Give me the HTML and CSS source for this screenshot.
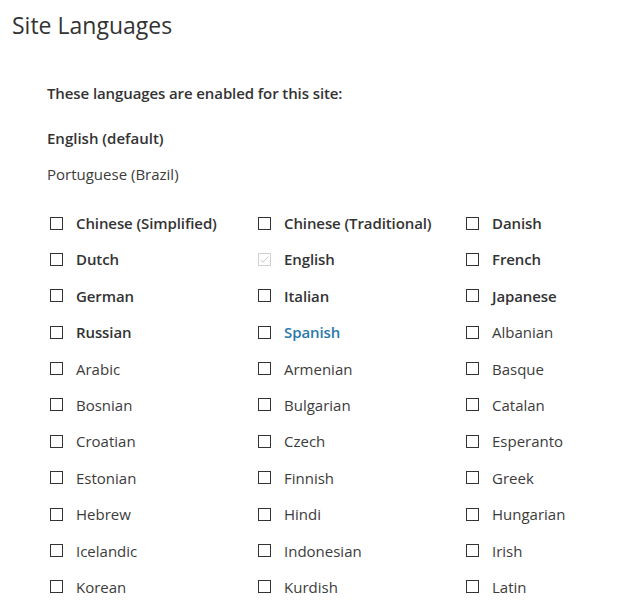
FILE: index.html
```html
<!DOCTYPE html>
<html>
<head>
<meta charset="utf-8">
<link rel="stylesheet" href="styles.css">
</head>
<body>
<h1 class="title">Site Languages</h1>
<div class="content">
  <p class="intro">These languages are enabled for this site:</p>
  <p class="enabled default">English (default)</p>
  <p class="enabled">Portuguese (Brazil)</p>
  <ul class="langs">
    <li class="lang bold"><span class="box"></span><span>Chinese (Simplified)</span></li>
    <li class="lang bold"><span class="box"></span><span>Chinese (Traditional)</span></li>
    <li class="lang bold"><span class="box"></span><span>Danish</span></li>
    <li class="lang bold"><span class="box"></span><span>Dutch</span></li>
    <li class="lang bold"><span class="box disabled"><svg viewBox="0 0 13 13" width="13" height="13"><path d="M2.5 6.8 L5 9.2 L10.5 3.6" fill="none" stroke="#c8c8c8" stroke-width="1"/></svg></span><span>English</span></li>
    <li class="lang bold"><span class="box"></span><span>French</span></li>
    <li class="lang bold"><span class="box"></span><span>German</span></li>
    <li class="lang bold"><span class="box"></span><span>Italian</span></li>
    <li class="lang bold"><span class="box"></span><span>Japanese</span></li>
    <li class="lang bold"><span class="box"></span><span>Russian</span></li>
    <li class="lang bold link"><span class="box"></span><span>Spanish</span></li>
    <li class="lang"><span class="box"></span><span>Albanian</span></li>
    <li class="lang"><span class="box"></span><span>Arabic</span></li>
    <li class="lang"><span class="box"></span><span>Armenian</span></li>
    <li class="lang"><span class="box"></span><span>Basque</span></li>
    <li class="lang"><span class="box"></span><span>Bosnian</span></li>
    <li class="lang"><span class="box"></span><span>Bulgarian</span></li>
    <li class="lang"><span class="box"></span><span>Catalan</span></li>
    <li class="lang"><span class="box"></span><span>Croatian</span></li>
    <li class="lang"><span class="box"></span><span>Czech</span></li>
    <li class="lang"><span class="box"></span><span>Esperanto</span></li>
    <li class="lang"><span class="box"></span><span>Estonian</span></li>
    <li class="lang"><span class="box"></span><span>Finnish</span></li>
    <li class="lang"><span class="box"></span><span>Greek</span></li>
    <li class="lang"><span class="box"></span><span>Hebrew</span></li>
    <li class="lang"><span class="box"></span><span>Hindi</span></li>
    <li class="lang"><span class="box"></span><span>Hungarian</span></li>
    <li class="lang"><span class="box"></span><span>Icelandic</span></li>
    <li class="lang"><span class="box"></span><span>Indonesian</span></li>
    <li class="lang"><span class="box"></span><span>Irish</span></li>
    <li class="lang"><span class="box"></span><span>Korean</span></li>
    <li class="lang"><span class="box"></span><span>Kurdish</span></li>
    <li class="lang"><span class="box"></span><span>Latin</span></li>
  </ul>
</div>
</body>
</html>
```

FILE: styles.css
```css
html, body {
  margin: 0;
  padding: 0;
  background: #fff;
}
body {
  font-family: "Open Sans", "Noto Sans", sans-serif;
  color: #3c3c3c;
  font-size: 15px;
  overflow: hidden;
}
.title {
  margin: 0;
  padding: 8px 0 0 12px;
  font-size: 23px;
  font-weight: 400;
  line-height: 34px;
  color: #333;
}
.content {
  padding: 40px 0 0 47px;
}
.intro {
  margin: 0;
  font-weight: 600;
  line-height: 22px;
  color: #333;
  letter-spacing: -0.1px;
}
.enabled {
  margin: 0;
  line-height: 22px;
}
.default {
  margin-top: 23px;
  font-weight: 600;
  color: #333;
}
.enabled + .enabled {
  margin-top: 14px;
}
.langs {
  list-style: none;
  margin: 27px 0 0 0;
  padding: 0 0 0 3px;
  display: grid;
  grid-template-columns: 208px 208px 150px;
  grid-auto-rows: 36.4px;
}
.lang {
  display: flex;
  align-items: center;
  gap: 13px;
  height: 22px;
  line-height: 22px;
  white-space: nowrap;
}
.lang.bold {
  font-weight: 600;
  color: #333;
  letter-spacing: -0.1px;
}
.lang.link {
  color: #2a79aa;
}
.box {
  width: 11px;
  height: 11px;
  border: 1px solid #333;
  flex: none;
  position: relative;
}
.box.disabled {
  border-color: #d0d0d0;
}
.box svg {
  position: absolute;
  left: -1px;
  top: -1px;
}
```
